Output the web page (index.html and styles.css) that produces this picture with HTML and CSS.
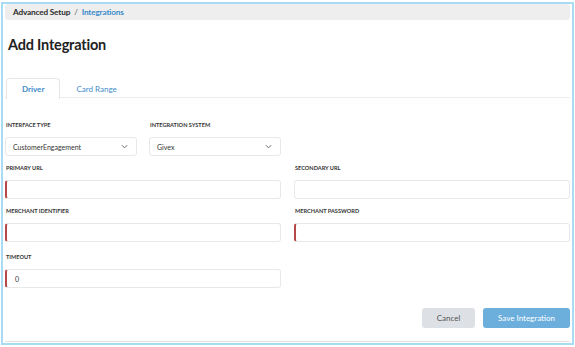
FILE: index.html
```html
<!DOCTYPE html>
<html>
<head>
<meta charset="utf-8">
<link rel="stylesheet" href="styles.css">
</head>
<body>
<div class="frame">
  <div class="breadcrumb">
    <span class="crumb">Advanced Setup</span>
    <span class="sep">/</span>
    <span class="crumb active">Integrations</span>
  </div>
  <h1 class="title">Add Integration</h1>
  <div class="tabs">
    <div class="tab selected">Driver</div>
    <div class="tab">Card Range</div>
  </div>
  <div class="form">
    <div class="pair">
      <div class="field">
        <label class="label">Interface Type</label>
        <div class="control select"><span>CustomerEngagement</span>
          <svg class="chev" viewBox="0 0 8 5" width="7" height="5"><polyline points="1,1 4,4 7,1" fill="none" stroke="#555" stroke-width="1"/></svg>
        </div>
      </div>
      <div class="field">
        <label class="label">Integration System</label>
        <div class="control select"><span>Givex</span>
          <svg class="chev" viewBox="0 0 8 5" width="7" height="5"><polyline points="1,1 4,4 7,1" fill="none" stroke="#555" stroke-width="1"/></svg>
        </div>
      </div>
    </div>
    <div></div>
    <div class="field">
      <label class="label">Primary URL</label>
      <div class="control required"></div>
    </div>
    <div class="field">
      <label class="label">Secondary URL</label>
      <div class="control"></div>
    </div>
    <div class="field">
      <label class="label">Merchant Identifier</label>
      <div class="control required"></div>
    </div>
    <div class="field">
      <label class="label">Merchant Password</label>
      <div class="control required"></div>
    </div>
    <div class="field timeout">
      <label class="label">Timeout</label>
      <div class="control required"><span>0</span></div>
    </div>
  </div>
  <div class="actions">
    <button class="btn cancel">Cancel</button>
    <button class="btn save">Save Integration</button>
  </div>
  <div class="footer-line"></div>
</div>
</body>
</html>
```

FILE: styles.css
```css
* { box-sizing: border-box; }
html, body { margin: 0; padding: 0; background: #fff; }
body { font-family: Lato, "Noto Sans", sans-serif; color: #333; }

.frame {
  margin: 2px 1px 0 1px;
  height: 343px;
  border: 2px solid #a9dcf2;
  padding: 0 2px;
  display: flex;
  flex-direction: column;
}

.breadcrumb {
  height: 16px;
  background: #eeeeee;
  border-radius: 3px;
  padding-left: 8px;
  display: flex;
  align-items: center;
  gap: 4px;
  font-size: 8.2px;
  letter-spacing: -0.15px;
  font-weight: 700;
  color: #2b2b2b;
}
.breadcrumb .sep { font-weight: 400; color: #555; }
.breadcrumb .active { color: #3b8ccb; }

.title {
  margin: 15px 0 0 3px;
  font-size: 14.5px;
  letter-spacing: -0.2px;
  line-height: 20px;
  font-weight: 700;
  color: #222;
}

.tabs {
  margin-top: 23px;
  display: flex;
  height: 20px;
  border-bottom: 1px solid #ececec;
  padding-left: 1px;
}
.tab {
  padding: 0 15px;
  height: 20px;
  display: flex;
  align-items: center;
  font-size: 8px;
  color: #3f8dcc;
  border: 1px solid transparent;
  border-bottom: none;
  border-radius: 4px 4px 0 0;
}
.tab.selected {
  font-weight: 700;
  border-color: #e6e6e6;
  background: #fff;
  height: 21px;
  margin-bottom: -1px;
}

.form {
  margin-top: 21px;
  display: grid;
  grid-template-columns: 1fr 1fr;
  column-gap: 13px;
}
.pair {
  display: grid;
  grid-template-columns: 1fr 1fr;
  column-gap: 12px;
}
.field { margin-bottom: 6px; }
.field.timeout { margin-top: 3px; }
.label {
  display: block;
  height: 12px;
  line-height: 12px;
  margin-bottom: 6px;
  font-size: 5.6px;
  font-weight: 700;
  text-transform: uppercase;
  color: #333;
  padding-left: 1px;
}
.control {
  height: 19px;
  border: 1px solid #e8e8e8;
  border-radius: 3px;
  background: #fff;
  display: flex;
  align-items: center;
  padding: 0 7px;
  font-size: 7px;
  color: #333;
}
.control.required {
  border-left: 2px solid #b5494a;
  padding-left: 8px;
}
.select { justify-content: space-between; padding-right: 8px; }
.chev { display: block; }

.actions {
  margin-top: 14px;
  display: flex;
  justify-content: flex-end;
  gap: 8px;
  padding-right: 0;
}
.btn {
  height: 20px;
  border: none;
  border-radius: 3px;
  font-family: inherit;
  font-size: 8px;
  padding: 0;
}
.cancel { width: 53px; background: #dde1e6; color: #555; }
.save { width: 87px; background: #6cafdd; color: #fff; }

.footer-line {
  margin-top: auto;
  margin-bottom: 1px;
  height: 1px;
  background: #e4e4e4;
}
```
